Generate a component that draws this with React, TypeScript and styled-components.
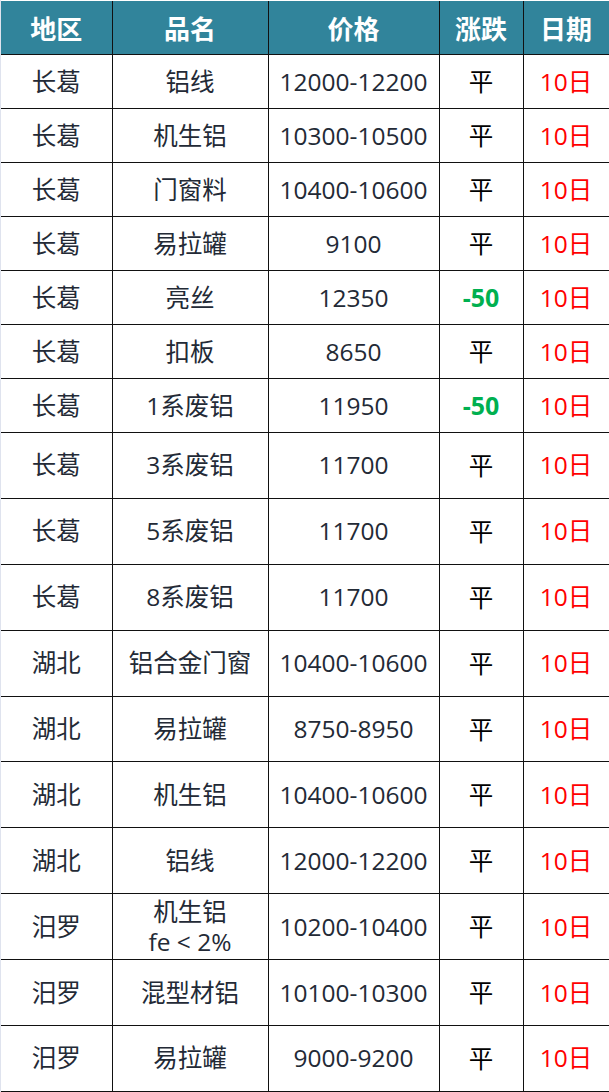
import React from 'react';
import styled, { createGlobalStyle } from 'styled-components';

const GlobalStyle = createGlobalStyle`
	html, body {
		margin: 0;
		padding: 0;
		background: #fff;
	}
	body {
		font-family: "Open Sans", "Noto Sans CJK SC", sans-serif;
	}
`;

type Row = {
	region: string;
	name: string[];
	price: string;
	change: string;
};

const rows: Row[] = [
	{ region: '长葛', name: ['铝线'], price: '12000-12200', change: '平' },
	{ region: '长葛', name: ['机生铝'], price: '10300-10500', change: '平' },
	{ region: '长葛', name: ['门窗料'], price: '10400-10600', change: '平' },
	{ region: '长葛', name: ['易拉罐'], price: '9100', change: '平' },
	{ region: '长葛', name: ['亮丝'], price: '12350', change: '-50' },
	{ region: '长葛', name: ['扣板'], price: '8650', change: '平' },
	{ region: '长葛', name: ['1系废铝'], price: '11950', change: '-50' },
	{ region: '长葛', name: ['3系废铝'], price: '11700', change: '平' },
	{ region: '长葛', name: ['5系废铝'], price: '11700', change: '平' },
	{ region: '长葛', name: ['8系废铝'], price: '11700', change: '平' },
	{ region: '湖北', name: ['铝合金门窗'], price: '10400-10600', change: '平' },
	{ region: '湖北', name: ['易拉罐'], price: '8750-8950', change: '平' },
	{ region: '湖北', name: ['机生铝'], price: '10400-10600', change: '平' },
	{ region: '湖北', name: ['铝线'], price: '12000-12200', change: '平' },
	{ region: '汨罗', name: ['机生铝', 'fe < 2%'], price: '10200-10400', change: '平' },
	{ region: '汨罗', name: ['混型材铝'], price: '10100-10300', change: '平' },
	{ region: '汨罗', name: ['易拉罐'], price: '9000-9200', change: '平' },
];

const Wrapper = styled.div`
	width: 609px;
	overflow: hidden;
	border-left: 1px solid #dfe3ee;
	box-sizing: border-box;
`;

const Table = styled.table`
	width: 608px;
	border-collapse: collapse;
	table-layout: fixed;
	margin-top: 1px;
`;

const Head = styled.th`
	height: 53px;
	padding: 0;
	background: #31849b;
	color: #fff;
	font-family: "Noto Sans CJK SC", sans-serif;
	font-size: 26px;
	font-weight: 700;
	text-align: center;
	border: 1px solid #111;
	border-top: none;
	&:first-child {
		border-left: none;
	}
`;

const Cell = styled.td<{ $tall: boolean }>`
	height: ${(p) => (p.$tall ? '64.9px' : '53px')};
	padding: 0;
	text-align: center;
	vertical-align: middle;
	font-size: 24.5px;
	line-height: 30px;
	color: #232a36;
	border: 1px solid #111;
	&:first-child {
		border-left: none;
	}
`;

const Flat = styled.span`
	color: #000;
	font-family: "Noto Sans CJK SC", sans-serif;
`;

const Drop = styled.span`
	color: #00b050;
	font-weight: 700;
	font-size: 25px;
`;

const DateText = styled.span`
	color: #f00;
`;

export default function App() {
	return (
		<>
			<GlobalStyle />
			<Wrapper>
				<Table>
					<colgroup>
						<col style={{ width: 111 }} />
						<col style={{ width: 156 }} />
						<col style={{ width: 171 }} />
						<col style={{ width: 84 }} />
						<col style={{ width: 86 }} />
					</colgroup>
					<thead>
						<tr>
							<Head>地区</Head>
							<Head>品名</Head>
							<Head>价格</Head>
							<Head>涨跌</Head>
							<Head>日期</Head>
						</tr>
					</thead>
					<tbody>
						{rows.map((r, i) => {
							const tall = i >= 7;
							return (
								<tr key={i}>
									<Cell $tall={tall}>{r.region}</Cell>
									<Cell $tall={tall}>
										{r.name.map((n, j) => (
											<div key={j}>{n}</div>
										))}
									</Cell>
									<Cell $tall={tall}>{r.price}</Cell>
									<Cell $tall={tall}>
										{r.change === '平' ? <Flat>平</Flat> : <Drop>{r.change}</Drop>}
									</Cell>
									<Cell $tall={tall}>
										<DateText>10日</DateText>
									</Cell>
								</tr>
							);
						})}
					</tbody>
				</Table>
			</Wrapper>
		</>
	);
}
